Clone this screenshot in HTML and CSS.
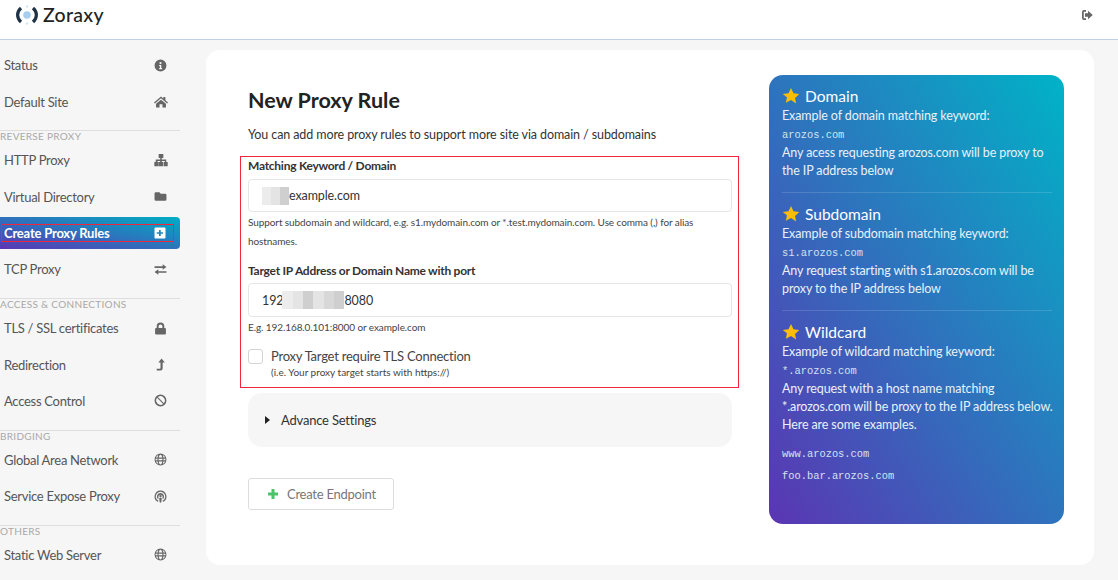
FILE: index.html
```html
<!DOCTYPE html>
<html lang="en">
<head>
<meta charset="utf-8">
<title>Zoraxy</title>
<link rel="stylesheet" href="styles.css">
</head>
<body>
<svg class="defs" width="0" height="0" aria-hidden="true">
  <symbol id="i-star" viewBox="0 0 24 24"><path d="M12 1.200l3.300 7 7.700 1-5.600 5.300 1.400 7.600L12 17.400l-6.800 3.700 1.400-7.600L1 9.200l7.700-1z"/></symbol>
  <symbol id="i-globe" viewBox="0 0 24 24"><path fill-rule="evenodd" d="M12 1a11 11 0 1 0 0 22 11 11 0 0 0 0-22zM8.700 8.500C9.300 5 10.700 3 12 3s2.700 2 3.300 5.500zm-2 0H3.500A9 9 0 0 1 8 3.900C7.400 5 7 6.600 6.700 8.500zm10.600 0C17 6.600 16.600 5 16 3.900a9 9 0 0 1 4.500 4.600zM8.500 10.500h7a24 24 0 0 1 0 3h-7a24 24 0 0 1 0-3zm-2 0a26 26 0 0 0 0 3H3a9 9 0 0 1 0-3zm11 0H21a9 9 0 0 1 0 3h-3.500a26 26 0 0 0 0-3zM8.700 15.500h6.600C14.700 19 13.300 21 12 21s-2.700-2-3.300-5.500zm-5.200 0h3.200c.3 1.900.7 3.500 1.300 4.600a9 9 0 0 1-4.500-4.600zm13.800 0h3.200a9 9 0 0 1-4.500 4.600c.6-1.100 1-2.700 1.300-4.600z"/></symbol>
</svg>

<header class="topbar">
  <div class="brand">
    <svg class="logo" viewBox="0 0 24 24">
      <path class="logo-arc" d="M6 5C1.500 9 1.500 15 6 19"/>
      <path class="logo-arc" d="M18 5C22.500 9 22.500 15 18 19"/>
      <circle class="logo-dot" cx="12" cy="12" r="3.800"/>
      <circle class="logo-dot-faint" cx="12" cy="3.500" r="1.300"/>
      <circle class="logo-dot-faint" cx="12" cy="20.500" r="1.300"/>
    </svg>
    <span class="brand-name">Zoraxy</span>
  </div>
  <svg class="signout" viewBox="0 0 24 24"><path d="M10 2H6a4 4 0 0 0-4 4v12a4 4 0 0 0 4 4h4v-3.500H6a.5.5 0 0 1-.5-.5V6a.5.5 0 0 1 .5-.5h4z"/><path d="M14 3.500l9.500 8.500-9.500 8.500V15.500H8v-7h6z"/></svg>
</header>

<div class="layout">
  <nav class="sidebar">
    <a class="item"><span>Status</span><svg class="ico" viewBox="0 0 24 24"><path fill-rule="evenodd" d="M12 1a11 11 0 1 0 0 22 11 11 0 0 0 0-22zm0 4.500a2 2 0 1 1 0 4 2 2 0 0 1 0-4zM9.500 11h4v5.500H15V19H9.500v-2.500H11V13.500H9.500z"/></svg></a>
    <a class="item"><span>Default Site</span><svg class="ico ico-wide" viewBox="0 0 24 24"><path d="M12 2.500l4 3.400V3.500h3.500V9l4.500 3.800-1.500 1.700L12 5.700 1.500 14.500 0 12.800z"/><path d="M12 8l8.500 7v6.500h-6v-5.500h-5v5.500h-6V15z"/></svg></a>
    <div class="group">Reverse Proxy</div>
    <a class="item"><span>HTTP Proxy</span><svg class="ico ico-wide" viewBox="0 0 24 24"><path d="M8 1.500h8v7h-2.700V11H21v4.500h2.500V22.500h-7V15.500h2V13.500h-5v2h2V22.500h-7V15.500h2v-2H6v2h2V22.500H.5V15.500H3V11h7.700V8.500H8z"/></svg></a>
    <a class="item"><span>Virtual Directory</span><svg class="ico" viewBox="0 0 24 24"><path d="M1 6.500A2.500 2.500 0 0 1 3.500 4H10l2.500 3h8A2.500 2.500 0 0 1 23 9.500v8a2.500 2.500 0 0 1-2.500 2.500h-17A2.500 2.500 0 0 1 1 17.500z"/></svg></a>
    <a class="item item-active"><span class="item-mark"><span>Create Proxy Rules</span><svg class="ico" viewBox="0 0 24 24"><path fill-rule="evenodd" d="M3 1h18a2 2 0 0 1 2 2v18a2 2 0 0 1-2 2H3a2 2 0 0 1-2-2V3a2 2 0 0 1 2-2zm7 5v4.500H5.500v3H10V18h3.500v-4.500H18v-3h-4.500V6z"/></svg></span></a>
    <a class="item"><span>TCP Proxy</span><svg class="ico" viewBox="0 0 24 24"><path d="M1 6h15V2.500l7 5-7 5V9H1zM23 15v3H8v3.500l-7-5 7-5V15z"/></svg></a>
    <div class="group">Access &amp; Connections</div>
    <a class="item"><span>TLS / SSL certificates</span><svg class="ico" viewBox="0 0 24 24"><path fill-rule="evenodd" d="M12 1a7 7 0 0 1 7 7v3h1a2 2 0 0 1 2 2v8a2 2 0 0 1-2 2H4a2 2 0 0 1-2-2v-8a2 2 0 0 1 2-2h1V8a7 7 0 0 1 7-7zm0 3.500A3.500 3.500 0 0 0 8.500 8v3h7V8A3.500 3.500 0 0 0 12 4.500z"/></svg></a>
    <a class="item"><span>Redirection</span><svg class="ico" viewBox="0 0 24 24"><path d="M14 1l6 7.500h-4V19a4 4 0 0 1-4 4H5v-3h6a1.500 1.500 0 0 0 1-1.500v-10H8z"/></svg></a>
    <a class="item"><span>Access Control</span><svg class="ico" viewBox="0 0 24 24"><path fill-rule="evenodd" d="M12 1a11 11 0 1 0 0 22 11 11 0 0 0 0-22zm6.300 15.900L7.100 5.700a8 8 0 0 1 11.200 11.200zM5.700 7.100l11.200 11.200A8 8 0 0 1 5.700 7.100z"/></svg></a>
    <div class="group">Bridging</div>
    <a class="item"><span>Global Area Network</span><svg class="ico"><use href="#i-globe"/></svg></a>
    <a class="item"><span>Service Expose Proxy</span><svg class="ico" viewBox="0 0 24 24"><path fill-rule="evenodd" d="M12 1a11 11 0 0 1 4.500 21l-.4-2.400a8.700 8.700 0 1 0-8.200 0l-.4 2.400A11 11 0 0 1 12 1zm0 4.500a6.500 6.500 0 0 1 4 11.600l-.4-2.700a4 4 0 1 0-7.200 0L8 17.100a6.500 6.500 0 0 1 4-11.600zM12 9a2.200 2.200 0 1 1 0 4.400A2.200 2.200 0 0 1 12 9zm0 5.500c1.700 0 2.500.7 2.300 2.200l-.8 5.400c-.2 1-.6 1.400-1.500 1.400s-1.300-.4-1.500-1.400l-.8-5.400c-.2-1.500.6-2.200 2.300-2.200z"/></svg></a>
    <div class="group">Others</div>
    <a class="item"><span>Static Web Server</span><svg class="ico"><use href="#i-globe"/></svg></a>
  </nav>

  <main class="card">
    <section class="form-col">
      <h1 class="title">New Proxy Rule</h1>
      <p class="lead">You can add more proxy rules to support more site via domain / subdomains</p>
      <div class="highlight">
        <label class="field-label">Matching Keyword / Domain</label>
        <div class="input"><span class="mosaic mosaic-a"><i></i><i></i><i></i></span>example.com</div>
        <p class="hint">Support subdomain and wildcard, e.g. s1.mydomain.com or *.test.mydomain.com. Use comma (,) for alias hostnames.</p>
        <label class="field-label field-second">Target IP Address or Domain Name with port</label>
        <div class="input input-second">192<span class="mosaic mosaic-b"><i></i><i></i><i></i><i></i><i></i><i></i></span>8080</div>
        <p class="hint">E.g. 192.168.0.101:8000 or example.com</p>
        <div class="check-row">
          <span class="checkbox"></span>
          <div>
            <div class="check-label">Proxy Target require TLS Connection</div>
            <div class="check-note">(i.e. Your proxy target starts with https://)</div>
          </div>
        </div>
      </div>
      <div class="advanced"><span class="caret"></span>Advance Settings</div>
      <button class="create" type="button"><svg class="plus" viewBox="0 0 24 24"><path d="M9 2h6v7h7v6h-7v7H9v-7H2V9h7z"/></svg>Create Endpoint</button>
    </section>

    <aside class="panel">
      <section class="panel-sec">
        <h2 class="panel-head"><svg class="star"><use href="#i-star"/></svg>Domain</h2>
        <div>Example of domain matching keyword:</div>
        <code class="mono">arozos.com</code>
        <div>Any acess requesting arozos.com will be proxy to the IP address below</div>
      </section>
      <section class="panel-sec">
        <h2 class="panel-head"><svg class="star"><use href="#i-star"/></svg>Subdomain</h2>
        <div>Example of subdomain matching keyword:</div>
        <code class="mono">s1.arozos.com</code>
        <div>Any request starting with s1.arozos.com will be proxy to the IP address below</div>
      </section>
      <section class="panel-sec">
        <h2 class="panel-head"><svg class="star"><use href="#i-star"/></svg>Wildcard</h2>
        <div>Example of wildcard matching keyword:</div>
        <code class="mono">*.arozos.com</code>
        <div class="panel-last">Any request with a host name matching *.arozos.com will be proxy to the IP address below. Here are some examples.</div>
        <code class="mono mono-list">www.arozos.com</code>
        <code class="mono mono-list">foo.bar.arozos.com</code>
      </section>
    </aside>
  </main>
</div>
</body>
</html>
```
FILE: styles.css
```css
* { box-sizing: border-box; }
html, body { height: 100%; }
body {
  margin: 0;
  height: 580px;
  overflow: hidden;
  background: #f6f6f6;
  color: #222;
  font-family: Lato, "Liberation Sans", sans-serif;
  font-size: 13px;
}
.defs { position: absolute; }

.topbar {
  height: 40px;
  background: #fff;
  border-bottom: 1px solid #bfd0e6;
  display: flex;
  align-items: center;
  justify-content: space-between;
  padding: 0 25px 10px 15px;
}
.brand { display: flex; align-items: center; gap: 4px; }
.logo { width: 24px; height: 24px; }
.logo-arc { fill: none; stroke: #1f3347; stroke-width: 3.200; }
.logo-dot { fill: #a6cdee; }
.logo-dot-faint { fill: #d5e6f5; }
.brand-name { font-size: 19.500px; font-weight: 500; color: #222; letter-spacing: .3px; }
.signout { width: 12px; height: 12px; fill: #666; }

.layout { display: flex; height: 540px; }

.sidebar { width: 180px; flex: none; padding-top: 7px; margin-right: 26px; }
.item {
  height: 36.350px;
  display: flex;
  align-items: center;
  justify-content: space-between;
  padding: 0 13px 0 4px;
  color: #555;
  font-size: 13px;
  letter-spacing: -.28px;
}
.ico { width: 13px; height: 13px; fill: #666; flex: none; }
.ico-wide { width: 16px; height: 14px; margin-right: -1.500px; }
.group {
  margin-top: 10.500px;
  height: 12px;
  border-top: 1px solid #dedede;
  color: #a8a8a8;
  font-size: 10px;
  line-height: 11px;
  text-transform: uppercase;
  letter-spacing: .3px;
}
.item-active {
  height: 32.350px;
  margin: 2px 0;
  padding: 0 0 0 1px;
  color: #fff;
  font-weight: 700;
  letter-spacing: -.2px;
  border-radius: 0 4px 4px 0;
  background: linear-gradient(to top right, #5a37b5, #00aec4);
}
.item-mark {
  flex: none;
  width: 173px;
  height: 18px;
  padding: 0 7px 0 2px;
  border: 1px solid #f0263a;
  display: flex;
  align-items: center;
  justify-content: space-between;
}
.item-active .ico { fill: #fff; width: 12px; height: 12px; }

.card {
  width: 888px;
  height: 515px;
  margin-top: 10px;
  background: #fff;
  border-radius: 14px;
  padding: 25px 30px 0 42px;
  display: flex;
  justify-content: space-between;
}
.form-col { width: 484px; }
.title { margin: 10px 0 0; font-size: 21.500px; line-height: 30px; font-weight: 700; color: #222; }
.lead { margin: 11px 0 0; font-size: 12.500px; letter-spacing: -.1px; line-height: 18px; color: #333; }

.highlight {
  margin: 12px -7px 0 -8px;
  padding: 0 6px 0 7px;
  height: 232px;
  border: 1px solid #f0263a;
}
.field-label { display: block; padding-top: 1px; font-size: 12px; letter-spacing: -.26px; line-height: 16px; font-weight: 700; color: #333; }
.field-second { padding-top: 0; margin-top: 13px; }
.input {
  height: 33px;
  margin-top: 5px;
  padding: 0 13px;
  border: 1px solid #e6e6e6;
  border-radius: 4px;
  background: #fff;
  display: flex;
  align-items: center;
  font-size: 12.500px;
  letter-spacing: -.1px;
  color: #333;
}
.input-second { margin-top: 4px; height: 34px; }
.mosaic { display: flex; height: 18px; }
.mosaic i { flex: 1; background: #d8d8d8; }
.mosaic i:nth-child(2n) { background: #e4e4e4; }
.mosaic i:nth-child(3n) { background: #cfcfcf; }
.mosaic i:first-child { background: #ececec; }
.mosaic-a { width: 27px; }
.mosaic-b { width: 62px; margin-left: -1px; }
.hint { margin: 1px 0 0; font-size: 10px; letter-spacing: -.09px; line-height: 18.500px; color: #444; }
.check-row { display: flex; gap: 8px; margin-top: 12px; }
.checkbox { width: 15px; height: 15px; border: 1px solid #d4d4d4; border-radius: 3px; flex: none; }
.check-label { font-size: 13px; letter-spacing: -.23px; line-height: 15px; color: #444; }
.check-note { font-size: 10px; line-height: 16px; color: #444; }

.advanced {
  height: 54px;
  margin-top: 5px;
  border-radius: 14px;
  background: #f6f6f6;
  display: flex;
  align-items: center;
  padding-left: 17px;
  font-size: 13px;
  letter-spacing: -.2px;
  color: #333;
}
.caret {
  width: 0;
  height: 0;
  margin-right: 11px;
  border-left: 5px solid #222;
  border-top: 4px solid transparent;
  border-bottom: 4px solid transparent;
}
.create {
  display: flex;
  align-items: center;
  width: 146px;
  height: 32px;
  margin-top: 31px;
  padding: 0 0 0 18px;
  background: #fff;
  border: 1px solid #ddd;
  border-radius: 3px;
  font-family: inherit;
  font-size: 13px;
  letter-spacing: -.25px;
  color: #777;
}
.plus { width: 12px; height: 12px; fill: #4cc26a; margin-right: 8px; }

.panel {
  width: 295px;
  height: 449px;
  padding: 0 12px 0 13px;
  border-radius: 14px;
  background: linear-gradient(to top right, #5b35b3, #00b3c7);
  color: #e9f1f8;
  font-size: 12.500px;
  letter-spacing: -.11px;
  line-height: 18px;
}
.panel-sec { padding: 10px 0 13px; border-bottom: 1px solid rgba(255,255,255,.14); height: 118px; }
.panel-sec:last-child { border-bottom: 0; }
.panel-head {
  display: flex;
  align-items: center;
  gap: 5px;
  margin: 0;
  font-size: 15.500px;
  font-weight: 400;
  letter-spacing: 0;
  line-height: 22px;
  color: #fff;
}
.star { width: 18px; height: 18px; fill: #fbbd08; }
.mono { display: block; padding-top: 1px; font-family: "Liberation Mono", monospace; font-size: 10.400px; letter-spacing: 0; line-height: 18px; font-weight: 400; color: #d3e2ef; }
.mono-list { padding-top: 0; line-height: 21.500px; }
.panel-last { margin: 0 -6px 10px 0; }
```
